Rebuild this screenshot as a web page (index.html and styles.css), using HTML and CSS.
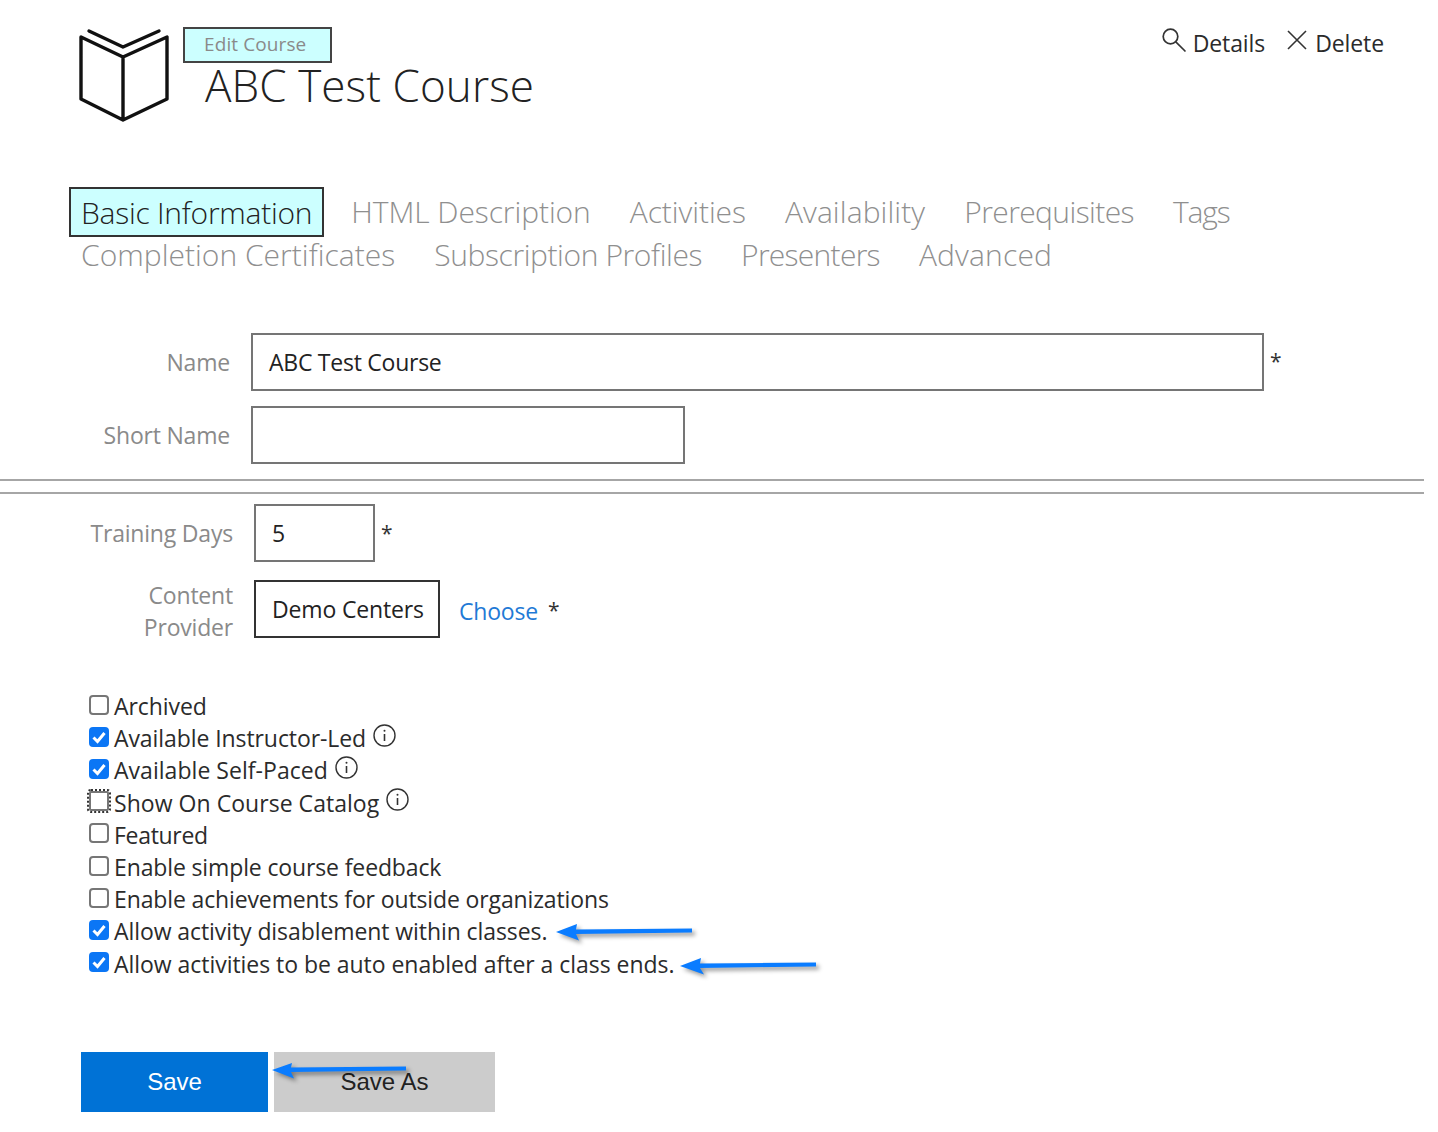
FILE: index.html
```html
<!DOCTYPE html>
<html lang="en">
<head>
<meta charset="utf-8">
<title>Edit Course</title>
<link rel="stylesheet" href="styles.css">
</head>
<body>
<div class="page">
  <header class="header">
    <svg class="book" width="92" height="96" viewBox="0 0 92 96" fill="none" stroke="#111" stroke-width="3.4" stroke-linejoin="round" stroke-linecap="round">
      <path d="M44 92 L2 71 V9 L44 29 L88 9 V71 Z M44 29 V92"/>
      <path d="M10 3 L44 19 L80 3"/>
    </svg>
    <div class="heading">
      <div class="tag">Edit Course</div>
      <h1 class="title">ABC Test Course</h1>
    </div>
    <nav class="actions">
      <a class="action action-details">
        <svg width="26" height="26" viewBox="0 0 26 26" fill="none" stroke="#333" stroke-width="1.7"><circle cx="9.5" cy="9.5" r="7.3"/><path d="M14.8 14.8 L24.5 24.5"/></svg>
        <span>Details</span>
      </a>
      <a class="action action-delete">
        <svg width="20" height="20" viewBox="0 0 20 20" fill="none" stroke="#333" stroke-width="1.6"><path d="M1 1 L19 19 M19 1 L1 19"/></svg>
        <span>Delete</span>
      </a>
    </nav>
  </header>

  <div class="tabs">
    <div class="tab-row tab-row-first">
      <span class="tab tab-active">Basic Information</span>
      <span class="tab">HTML Description</span>
      <span class="tab">Activities</span>
      <span class="tab tab-availability">Availability</span>
      <span class="tab tab-prereq">Prerequisites</span>
      <span class="tab tab-tags">Tags</span>
    </div>
    <div class="tab-row">
      <span class="tab tab-completion">Completion Certificates</span>
      <span class="tab tab-subscription">Subscription Profiles</span>
      <span class="tab tab-presenters">Presenters</span>
      <span class="tab tab-advanced">Advanced</span>
    </div>
  </div>

  <section class="fields-top">
    <div class="field">
      <label class="label label-wide">Name</label>
      <div class="box box-name">ABC Test Course</div>
      <span class="req req-name">*</span>
    </div>
    <div class="field">
      <label class="label label-wide">Short Name</label>
      <div class="box box-short"></div>
    </div>
  </section>

  <hr class="rule rule-a">
  <hr class="rule rule-b">

  <section class="fields-bottom">
    <div class="field">
      <label class="label label-narrow">Training Days</label>
      <div class="box box-days">5</div>
      <span class="req req-days">*</span>
    </div>
    <div class="field">
      <label class="label label-narrow label-two">Content Provider</label>
      <div class="box box-provider">Demo Centers</div>
      <a class="choose">Choose</a>
      <span class="req req-choose">*</span>
    </div>
  </section>

  <section class="checks">
    <div class="check"><span class="cb"></span>Archived</div>
    <div class="check"><span class="cb cb-on"><svg viewBox="0 0 20 20" width="20" height="20" fill="none" stroke="#fff" stroke-width="3"><path d="M4.5 10.5 L8.5 14.5 L15.5 6"/></svg></span>Available Instructor-Led<svg class="info" width="25" height="25" viewBox="0 0 25 25"><circle cx="12.5" cy="12.5" r="10.5" fill="none" stroke="#333" stroke-width="1.4"/><path d="M12.5 11 V18" stroke="#333" stroke-width="1.6"/><circle cx="12.5" cy="7.8" r="1" fill="#333"/></svg></div>
    <div class="check check-wide"><span class="cb cb-on"><svg viewBox="0 0 20 20" width="20" height="20" fill="none" stroke="#fff" stroke-width="3"><path d="M4.5 10.5 L8.5 14.5 L15.5 6"/></svg></span>Available Self-Paced<svg class="info" width="25" height="25" viewBox="0 0 25 25"><circle cx="12.5" cy="12.5" r="10.5" fill="none" stroke="#333" stroke-width="1.4"/><path d="M12.5 11 V18" stroke="#333" stroke-width="1.6"/><circle cx="12.5" cy="7.8" r="1" fill="#333"/></svg></div>
    <div class="check check-wide"><span class="cb cb-focus"></span>Show On Course Catalog<svg class="info" width="25" height="25" viewBox="0 0 25 25"><circle cx="12.5" cy="12.5" r="10.5" fill="none" stroke="#333" stroke-width="1.4"/><path d="M12.5 11 V18" stroke="#333" stroke-width="1.6"/><circle cx="12.5" cy="7.8" r="1" fill="#333"/></svg></div>
    <div class="check check-narrow"><span class="cb"></span>Featured</div>
    <div class="check check-snug"><span class="cb"></span>Enable simple course feedback</div>
    <div class="check check-snug"><span class="cb"></span>Enable achievements for outside organizations</div>
    <div class="check"><span class="cb cb-on"><svg viewBox="0 0 20 20" width="20" height="20" fill="none" stroke="#fff" stroke-width="3"><path d="M4.5 10.5 L8.5 14.5 L15.5 6"/></svg></span>Allow activity disablement within classes.</div>
    <div class="check check-loose"><span class="cb cb-on"><svg viewBox="0 0 20 20" width="20" height="20" fill="none" stroke="#fff" stroke-width="3"><path d="M4.5 10.5 L8.5 14.5 L15.5 6"/></svg></span>Allow activities to be auto enabled after a class ends.</div>
  </section>

  <div class="buttons">
    <button class="btn btn-save">Save</button>
    <button class="btn btn-saveas">Save As</button>
  </div>

  <svg class="arrow arrow-1" width="140" height="24" viewBox="0 0 140 24"><path d="M0 11 L21 3 L20 8.5 L136 7.5 V11.5 L20 13 L23 19.5 Z" fill="#0a7cff"/></svg>
  <svg class="arrow arrow-2" width="140" height="24" viewBox="0 0 140 24"><path d="M0 11 L21 3 L20 8.5 L136 7.5 V11.5 L20 13 L24 19.5 Z" fill="#0a7cff"/></svg>
  <svg class="arrow arrow-3" width="140" height="24" viewBox="0 0 140 24"><path d="M0 11 L20 4 L19 8.5 L134 7.5 V11.5 L19 13 L22 19.5 Z" fill="#0a7cff"/></svg>
</div>
</body>
</html>
```
FILE: styles.css
```css
* { box-sizing: border-box; }
html, body { margin: 0; padding: 0; background: #fff; }
body { font-family: "Open Sans", "Noto Sans", "Liberation Sans", sans-serif; color: #2b2b2b; }
.page { position: relative; width: 1438px; height: 1132px; overflow: hidden; }

.header { display: flex; align-items: flex-start; padding: 27px 54px 0 79px; height: 191px; }
.book { margin-top: 1px; flex: none; }
.heading { margin-left: 12px; flex: none; }
.tag { width: 149px; height: 36px; background: #ccffff; border: 2px solid #444; color: #8a8a8a; font-size: 19px; line-height: 30px; padding-left: 19px; letter-spacing: 0.1px; }
.title { margin: 0 0 0 22px; font-size: 44px; font-weight: 300; line-height: 44px; color: #222; letter-spacing: 0.1px; }
.actions { margin-left: auto; display: flex; align-items: flex-start; gap: 22px; }
.action { display: flex; align-items: flex-start; color: #2b2b2b; font-size: 23px; letter-spacing: -0.1px; }
.action span { line-height: 32px; }
.action svg { flex: none; }
.action-details svg { margin-right: 6px; }
.action-delete svg { margin: 3px 8px 0 0; }

.tabs { padding-left: 81px; }
.tab-row { display: flex; gap: 39px; height: 42.25px; align-items: center; font-size: 30px; font-weight: 300; color: #8f8f8f; letter-spacing: -0.08px; white-space: nowrap; }
.tab-row-first { height: 43.25px; }
.tab-row-first .tab { margin-bottom: 2px; }
.tab { line-height: 42px; flex: none; }
.tab-row-first .tab-active { color: #222; background: #ccffff; outline: 2px solid #333; padding: 3px 10px 1px; margin: 0 -10px 1px; height: 46px; letter-spacing: -0.25px; }
.tab-availability { letter-spacing: 0.1px; }
.tab-prereq { letter-spacing: -0.6px; }
.tab-tags { letter-spacing: -1.1px; }
.tab-completion { letter-spacing: 0.02px; }
.tab-subscription { letter-spacing: -0.4px; }
.tab-presenters { letter-spacing: -0.72px; }
.tab-advanced { letter-spacing: 0.17px; }

.fields-top { margin-top: 56.5px; }
.field { display: flex; align-items: center; }
.fields-top .field { height: 58px; margin-bottom: 15px; }
.label { text-align: right; color: #8a8a8a; font-size: 23px; letter-spacing: -0.2px; flex: none; line-height: 32px; }
.label-wide { width: 230px; margin-right: 21px; }
.label-narrow { width: 233px; margin-right: 21px; }
.label-two { white-space: normal; padding: 2px 0 0 120px; }
.box { height: 58px; border: 2px solid #757575; background: #fff; font-size: 23px; line-height: 54px; padding-left: 16px; color: #222; letter-spacing: -0.25px; flex: none; white-space: nowrap; }
.box-name { width: 1013px; }
.box-short { width: 434px; }
.box-days { width: 121px; }
.box-provider { width: 186px; border-color: #333; letter-spacing: -0.15px; margin-bottom: 2px; }
.req { font-size: 21px; color: #333; }
.req-name { margin: -3px 0 0 6px; }
.req-days { margin: 0 0 0 6px; }
.req-choose { margin: 0 0 0 10px; }
.choose { margin: 2px 0 0 19px; color: #1f7ad6; font-size: 23px; letter-spacing: -0.2px; font-weight: 400; }

.rule { margin: 0; border: 0; height: 2px; width: 1424px; background: #a6a6a6; }
.rule-a { margin-top: 1px; }
.rule-b { margin-top: 11px; }

.fields-bottom { margin-top: 10px; }
.fields-bottom .field { margin-bottom: 15px; }

.checks { margin-top: 47px; padding-left: 89px; }
.check { display: flex; align-items: center; height: 32.2px; font-size: 23px; letter-spacing: -0.08px; color: #2b2b2b; white-space: nowrap; }
.check-wide { letter-spacing: 0.04px; }
.check-narrow { letter-spacing: -0.3px; }
.check-snug { letter-spacing: -0.13px; }
.check-loose { letter-spacing: -0.04px; }
.cb { width: 20px; height: 20px; border: 2px solid #767676; border-radius: 4px; margin: -3px 5px 0 0; flex: none; background: #fff; }
.cb-on { border: 0; background: #0b76f5; }
.cb-on svg { display: block; }
.cb-focus { outline: 2px dotted #333; border-radius: 2px; }
.info { margin: -6px 0 0 6px; flex: none; }

.buttons { display: flex; gap: 6px; padding-left: 81px; margin-top: 72.7px; }
.btn { height: 60px; border: 0; font-family: "Liberation Sans", Arial, sans-serif; font-size: 24px; }
.btn-save { width: 187px; background: #0072d6; color: #fff; }
.btn-saveas { width: 221px; background: #cccccc; color: #222; }

.arrow { position: absolute; filter: drop-shadow(3px 3px 2px rgba(0,0,0,.4)); }
.arrow-1 { left: 556px; top: 921px; }
.arrow-2 { left: 680px; top: 955px; }
.arrow-3 { left: 272px; top: 1059px; }
```
